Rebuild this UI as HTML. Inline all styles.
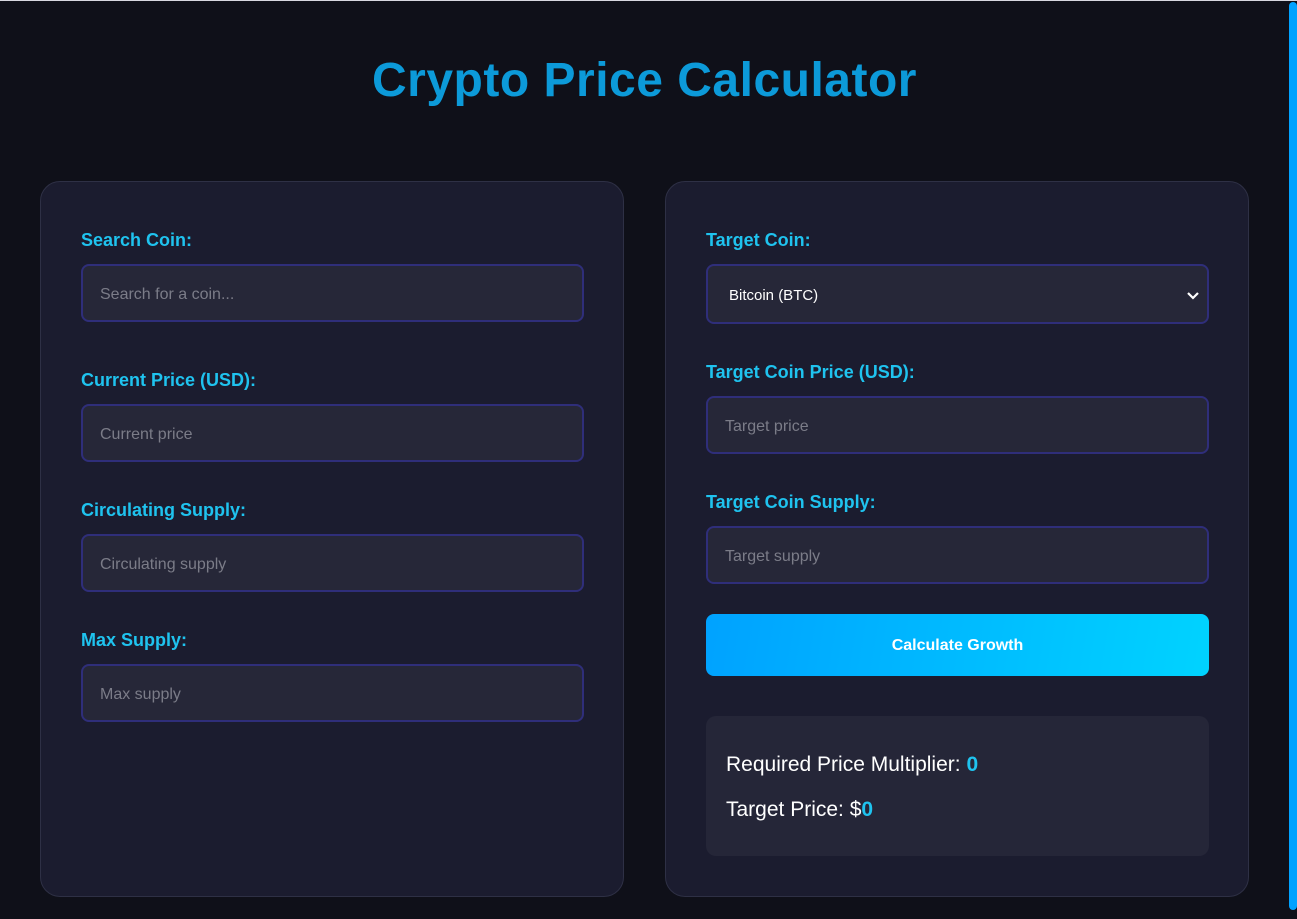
<!DOCTYPE html>
<html><head><meta charset="utf-8"><style>
*{box-sizing:border-box;margin:0;padding:0}
html,body{width:1297px;height:919px;overflow:hidden;background:#0f1019;font-family:"Liberation Sans",sans-serif}
.top{position:absolute;left:0;top:0;width:1297px;height:1px;background:#d8d8e0}
.sb{position:absolute;left:1289px;top:2px;width:8px;height:908px;background:#00a2ff;border-radius:4px}
h1{position:absolute;left:0;width:1289px;top:53px;text-align:center;font-size:48px;font-weight:bold;color:#0c9ad9;letter-spacing:0.5px}
.card{position:absolute;top:181px;width:584px;height:716px;background:#1b1c2f;border:1px solid #2e3045;border-radius:20px}
label{position:absolute;left:40px;font-size:18px;font-weight:bold;color:#1fc3ef;line-height:20px}
.in{position:absolute;left:40px;width:503px;height:58px;background:#262738;border:2px solid #2f2e7a;border-radius:8px;font-size:16px;color:#7b7c88;padding-left:17px;line-height:58px}
.sel{color:#fff;font-size:15px;padding-left:21px}
.btn{position:absolute;left:40px;top:432px;width:503px;height:62px;border-radius:8px;background:linear-gradient(100deg,#00a2ff,#00d3ff);color:#fff;font-weight:bold;font-size:16px;text-align:center;line-height:64px}
.res{position:absolute;left:40px;top:534px;width:503px;height:140px;border-radius:10px;background:#252638;color:#fff;font-size:21px}
.res div{position:absolute;left:20px}
.res b{color:#1fc3ef}
</style></head><body>
<div class="top"></div>
<h1>Crypto Price Calculator</h1>
<div class="card" style="left:40px">
<label style="top:48px">Search Coin:</label><div class="in" style="top:82px">Search for a coin...</div>
<label style="top:188px">Current Price (USD):</label><div class="in" style="top:222px">Current price</div>
<label style="top:318px">Circulating Supply:</label><div class="in" style="top:352px">Circulating supply</div>
<label style="top:448px">Max Supply:</label><div class="in" style="top:482px">Max supply</div>
</div>
<div class="card" style="left:665px">
<label style="top:48px">Target Coin:</label><div class="in sel" style="top:82px;height:60px;line-height:60px">Bitcoin (BTC)<svg style="position:absolute;right:8px;top:25px" width="12" height="10" viewBox="0 0 12 10"><path d="M1 2l5 5 5-5" stroke="#fff" stroke-width="2.2" fill="none"/></svg></div>
<label style="top:180px">Target Coin Price (USD):</label><div class="in" style="top:214px">Target price</div>
<label style="top:310px">Target Coin Supply:</label><div class="in" style="top:344px">Target supply</div>
<div class="btn">Calculate Growth</div>
<div class="res"><div style="top:37px">Required Price Multiplier: <b>0</b></div><div style="top:82px">Target Price: $<b>0</b></div></div>
</div>
<div class="sb"></div>
</body></html>
